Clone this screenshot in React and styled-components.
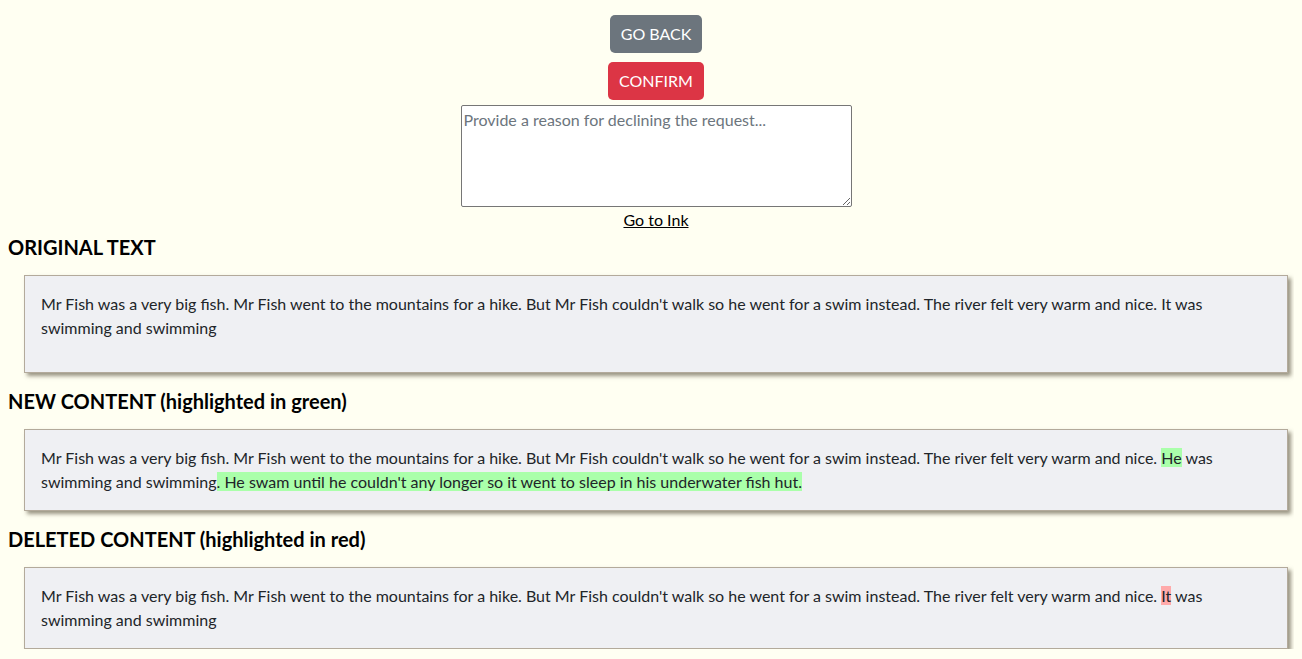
import React from "react";
import styled, { createGlobalStyle } from "styled-components";

const GlobalStyle = createGlobalStyle`
  body {
    margin: 8px;
    background: #fffff2;
    color: #212529;
    font-family: "Lato", "Liberation Sans", sans-serif;
    font-size: 16px;
    line-height: 1.5;
  }
`;

const original =
  "Mr Fish was a very big fish. Mr Fish went to the mountains for a hike. But Mr Fish couldn't walk so he went for a swim instead. The river felt very warm and nice. It was swimming and swimming";

export default function App() {
  return (
    <>
      <GlobalStyle />
      <Controls>
        <Button $variant="secondary">GO BACK</Button>
        <Button $variant="danger">CONFIRM</Button>
        <Reason placeholder="Provide a reason for declining the request..." />
        <InkLink href="#">Go to Ink</InkLink>
      </Controls>

      <Heading $first>ORIGINAL TEXT</Heading>
      <Box>
        <Text $spaced>{original}</Text>
      </Box>

      <Heading>NEW CONTENT (highlighted in green)</Heading>
      <Box>
        <Text>
          Mr Fish was a very big fish. Mr Fish went to the mountains for a hike. But Mr Fish
          couldn't walk so he went for a swim instead. The river felt very warm and nice.{" "}
          <Mark $added>He</Mark> was swimming and swimming
          <Mark $added>
            . He swam until he couldn't any longer so it went to sleep in his underwater fish hut.
          </Mark>
        </Text>
      </Box>

      <Heading>DELETED CONTENT (highlighted in red)</Heading>
      <Box>
        <Text>
          Mr Fish was a very big fish. Mr Fish went to the mountains for a hike. But Mr Fish
          couldn't walk so he went for a swim instead. The river felt very warm and nice.{" "}
          <Mark>It</Mark> was swimming and swimming
        </Text>
      </Box>
    </>
  );
}

const Controls = styled.div`
  display: flex;
  flex-direction: column;
  align-items: center;
  padding: 7px 0 0 10px;
`;

const Button = styled.button`
  font-family: inherit;
  font-size: 16px;
  line-height: 24px;
  padding: 6px 10px;
  color: #fff;
  border: 1px solid transparent;
  border-radius: 5px;
  cursor: pointer;
  background: ${(p) => (p.$variant === "danger" ? "#dc3545" : "#6c757d")};
  margin-bottom: ${(p) => (p.$variant === "danger" ? "5px" : "9px")};
`;

const Reason = styled.textarea`
  box-sizing: border-box;
  width: 391px;
  height: 102px;
  padding: 2px;
  border: 1px solid #767676;
  border-radius: 2px;
  background: #fff;
  font-family: inherit;
  font-size: 16px;
  line-height: 1.5;
  color: #212529;
  &::placeholder {
    color: #6c757d;
  }
`;

const InkLink = styled.a`
  color: #000;
  text-decoration: underline;
  line-height: 24px;
  margin-top: 1px;
`;

const Heading = styled.h2`
  font-size: 20px;
  font-weight: 700;
  line-height: 1.2;
  color: #000;
  margin: ${(p) => (p.$first ? "3px" : "16px")} 0 16px;
`;

const Box = styled.div`
  margin: 0 6px 0 16px;
  padding: 16px;
  background: #eff0f3;
  border: 1px solid #b3aa9b;
  box-shadow: 3px 3px 4px rgba(70, 60, 40, 0.55);
`;

const Text = styled.p`
  margin: 0 0 ${(p) => (p.$spaced ? "16px" : "0")};
`;

const Mark = styled.span`
  background: ${(p) => (p.$added ? "#aaffaa" : "#ffaaaa")};
`;
